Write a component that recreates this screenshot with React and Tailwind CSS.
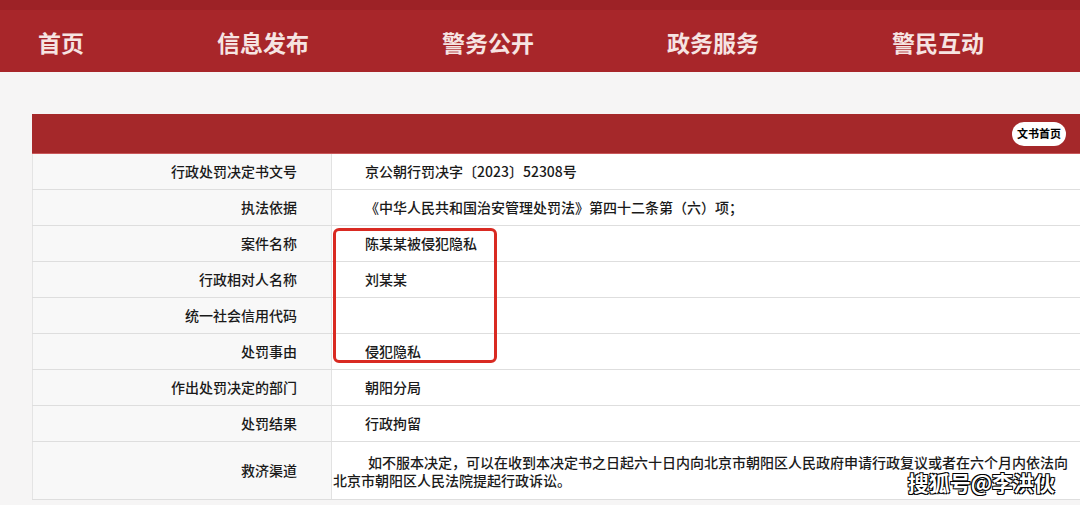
const rows = [
  { label: "行政处罚决定书文号", value: "京公朝行罚决字〔2023〕52308号" },
  { label: "执法依据", value: "《中华人民共和国治安管理处罚法》第四十二条第（六）项；" },
  { label: "案件名称", value: "陈某某被侵犯隐私" },
  { label: "行政相对人名称", value: "刘某某" },
  { label: "统一社会信用代码", value: "" },
  { label: "处罚事由", value: "侵犯隐私" },
  { label: "作出处罚决定的部门", value: "朝阳分局" },
  { label: "处罚结果", value: "行政拘留" },
];

const navItems = ["首页", "信息发布", "警务公开", "政务服务", "警民互动"];

export default function App() {
  return (
    <div
      className="relative h-[505px] w-[1080px] overflow-hidden bg-[#f6f5f5]"
      style={{ fontFamily: '"Noto Sans CJK SC", "Noto Sans", sans-serif' }}
    >
      {/* Top nav */}
      <div className="h-[72px] bg-[#a8262a] border-t-[10px] border-[#9d2226] flex items-center gap-[133px] pl-[38px] pt-[2px]">
        {navItems.map((item) => (
          <span key={item} className="text-[23px] font-bold text-[#f6e4e2]">
            {item}
          </span>
        ))}
      </div>

      {/* Decision table */}
      <div className="relative mt-[42px] ml-[32px]">
        <div className="h-[40px] bg-[#a5282a] border-b border-[#c9585a] flex items-center justify-end pr-[14px]">
          <span className="h-[24px] px-[5px] rounded-full bg-white text-black text-[11px] font-bold flex items-center">
            文书首页
          </span>
        </div>

        {rows.map((row) => (
          <div key={row.label} className="flex h-[36px] border-b border-[#dedede] text-[14px] font-medium text-[#1a1a1a]">
            <div className="w-[300px] shrink-0 bg-[#f8f8f8] border-r border-[#e2e2e2] border-l border-l-[#e4e4e4] flex items-center justify-end pr-[34px]">
              {row.label}
            </div>
            <div className="flex-1 bg-white flex items-center pl-[33px]">{row.value}</div>
          </div>
        ))}

        <div className="flex h-[58px] border-b border-[#dedede] text-[14px] font-medium text-[#1a1a1a]">
          <div className="w-[300px] shrink-0 bg-[#f8f8f8] border-r border-[#e2e2e2] border-l border-l-[#e4e4e4] flex items-center justify-end pr-[34px]">
            救济渠道
          </div>
          <div className="flex-1 bg-white pl-[1px] pr-[6px] pt-[11px]">
            <p className="indent-[35px] leading-[18px]">
              如不服本决定，可以在收到本决定书之日起六十日内向北京市朝阳区人民政府申请行政复议或者在六个月内依法向北京市朝阳区人民法院提起行政诉讼。
            </p>
          </div>
        </div>

        {/* Highlight box */}
        <div className="absolute left-[301px] top-[114px] w-[164px] h-[135px] border-[3px] border-[#d92a22] rounded-[6px]" />
      </div>

      {/* Watermark */}
      <div className="absolute right-[25px] top-[472px] text-[21px] font-bold text-white leading-none [text-shadow:1px_1px_0_#000,-1px_-1px_0_#000,1px_-1px_0_#000,-1px_1px_0_#000]">
        搜狐号@李洪伙
      </div>
    </div>
  );
}
